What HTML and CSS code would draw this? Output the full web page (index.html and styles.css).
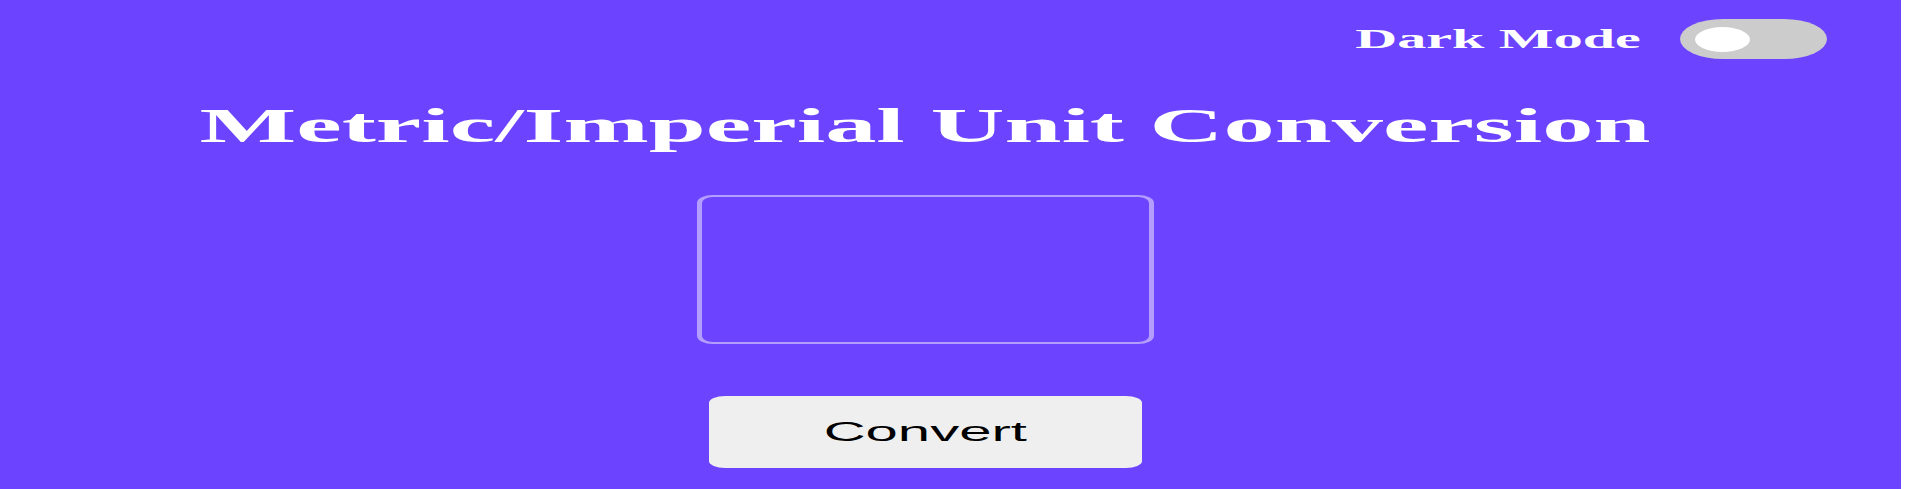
FILE: index.html
```html
<!DOCTYPE html>
<html lang="en">
<head>
<meta charset="utf-8">
<title>Metric/Imperial Unit Conversion</title>
<link rel="stylesheet" href="styles.css">
</head>
<body>
<div class="page">
  <div class="topbar">
    <span class="mode-label">Dark Mode</span>
    <div class="toggle"><div class="knob"></div></div>
  </div>
  <main class="main">
    <h1 class="title"><span class="stretch-title">Metric/Imperial Unit Conversion</span></h1>
    <input class="value-input" type="text" aria-label="Value">
    <button class="convert-btn" type="button"><span class="stretch-btn">Convert</span></button>
  </main>
</div>
</body>
</html>
```

FILE: styles.css
```css
html {
  background: #ffffff;
}
body {
  margin: 0;
}
.page {
  width: 1901px;
  height: 489px;
  background: #6c43ff;
  overflow: hidden;
}
.topbar {
  display: flex;
  justify-content: flex-end;
  align-items: center;
  gap: 39px;
  padding: 19px 74px 0 0;
  height: 40px;
}
.mode-label {
  display: inline-block;
  font-family: "Liberation Serif", "Times New Roman", serif;
  font-weight: bold;
  font-size: 27px;
  line-height: 27px;
  color: #ffffff;
  transform: scaleX(2.15);
  transform-origin: right center;
  white-space: nowrap;
}
.toggle {
  width: 147px;
  height: 40px;
  box-sizing: border-box;
  background: #cccccc;
  border-radius: 43px / 20px;
  display: flex;
  align-items: center;
  padding-left: 15px;
}
.knob {
  width: 55px;
  height: 25px;
  border-radius: 50%;
  background: #ffffff;
}
.main {
  width: 1850px;
  display: flex;
  flex-direction: column;
  align-items: center;
}
.title {
  margin: 43px 0 0;
  font-family: "Liberation Serif", "Times New Roman", serif;
  font-weight: bold;
  font-size: 48px;
  line-height: 48px;
  color: #ffffff;
  white-space: nowrap;
}
.stretch-title {
  display: inline-block;
  transform: scaleX(2.134);
  transform-origin: center;
}
.value-input {
  margin-top: 45px;
  width: 457px;
  height: 149px;
  box-sizing: border-box;
  background: transparent;
  border-style: solid;
  border-color: #b39dff;
  border-width: 2px 5px;
  border-radius: 16px / 8px;
  outline: none;
  padding: 0;
}
.convert-btn {
  margin-top: 52px;
  width: 433px;
  height: 72px;
  background: #efefef;
  border: none;
  border-radius: 16px / 7px;
  padding: 0;
  display: flex;
  align-items: center;
  justify-content: center;
  font-family: "Liberation Sans", Arial, sans-serif;
  font-size: 27px;
  color: #000000;
}
.stretch-btn {
  display: inline-block;
  transform: scaleX(2.15);
  transform-origin: center;
  line-height: 27px;
}
```
